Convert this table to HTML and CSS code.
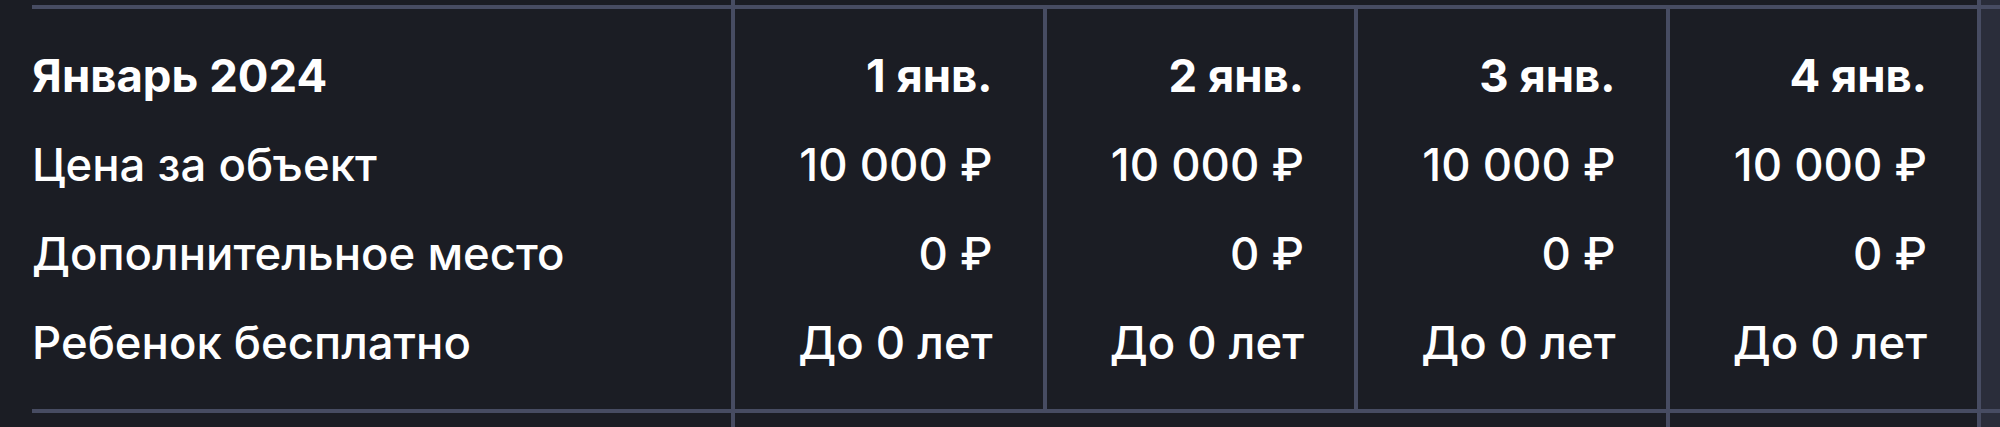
FILE: index.html
```html
<!DOCTYPE html>
<html lang="ru">
<head>
<meta charset="utf-8">
<title>Цены — Январь 2024</title>
<link rel="stylesheet" href="styles.css">
</head>
<body>
<div class="page">
  <div class="stub stub-top">
    <div class="stub-cell edge"></div>
    <div class="stub-cell"></div>
    <div class="stub-cell"></div>
    <div class="stub-cell"></div>
    <div class="stub-cell edge"></div>
    <div class="stub-cell filler"></div>
  </div>
  <div class="month">
    <div class="cell label head first">Январь 2024</div>
    <div class="cell head first">1 янв.</div>
    <div class="cell head first">2 янв.</div>
    <div class="cell head first">3 янв.</div>
    <div class="cell head first">4 янв.</div>
    <div class="filler-col"></div>

    <div class="cell label">Цена за объект</div>
    <div class="cell">10 000 ₽</div>
    <div class="cell">10 000 ₽</div>
    <div class="cell">10 000 ₽</div>
    <div class="cell">10 000 ₽</div>

    <div class="cell label">Дополнительное место</div>
    <div class="cell">0 ₽</div>
    <div class="cell">0 ₽</div>
    <div class="cell">0 ₽</div>
    <div class="cell">0 ₽</div>

    <div class="cell label last">Ребенок бесплатно</div>
    <div class="cell last">До 0 лет</div>
    <div class="cell last">До 0 лет</div>
    <div class="cell last">До 0 лет</div>
    <div class="cell last">До 0 лет</div>
  </div>
  <div class="stub stub-bottom">
    <div class="stub-cell edge"></div>
    <div class="stub-cell"></div>
    <div class="stub-cell"></div>
    <div class="stub-cell edge"></div>
    <div class="stub-cell edge"></div>
    <div class="stub-cell filler"></div>
  </div>
</div>
</body>
</html>
```

FILE: styles.css
```css
html, body {
  margin: 0;
  padding: 0;
  background: #1b1d24;
  overflow: hidden;
}

body {
  font-family: "Inter", "Noto Sans", sans-serif;
  color: #ffffff;
}

.page {
  width: 2000px;
  height: 427px;
  padding-left: 32px;
  box-sizing: border-box;
}

.stub,
.month {
  display: grid;
  grid-template-columns: 703px repeat(4, 311.5px) 1fr;
}

.stub-top {
  height: 5px;
}

.stub-bottom {
  height: 14px;
}

.stub-cell.edge {
  border-right: 4px solid #474c62;
}

.stub-cell.filler {
  background: #2a2d3a;
}

.month {
  grid-template-rows: 111px 89px 89px 111px;
  border-top: 4px solid #474c62;
  border-bottom: 4px solid #474c62;
}

.cell {
  display: flex;
  align-items: center;
  justify-content: flex-end;
  padding-right: 50px;
  border-right: 4px solid #474c62;
  font-size: 45.5px;
  font-weight: 500;
  white-space: nowrap;
}

.cell.label {
  justify-content: flex-start;
  padding-right: 0;
}

.cell.head {
  font-weight: 700;
}

.cell.first {
  padding-top: 22px;
}

.cell.last {
  padding-bottom: 22px;
}

.filler-col {
  grid-column: 6;
  grid-row: 1 / span 4;
  background: #2a2d3a;
}
```
